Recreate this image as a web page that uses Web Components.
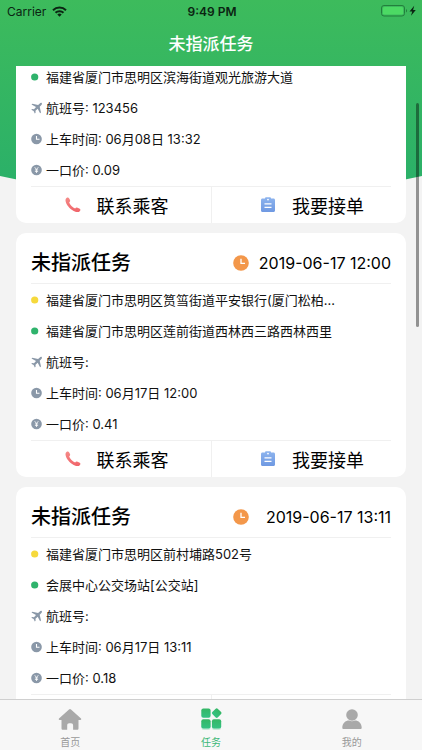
<!DOCTYPE html>
<html lang="zh-CN">
<head>
<meta charset="utf-8">
<meta name="viewport" content="width=device-width, initial-scale=1">
<title>未指派任务</title>
<style>
    body {
        margin: 0;
        background: #f3f3f3;
        color: #111;
        font-family: Inter, "Noto Sans CJK SC", sans-serif;
    }
</style>
</head>
<body>
<task-app>
    <status-bar slot="top" carrier="Carrier" time="9:49 PM"></status-bar>
    <nav-title slot="top">未指派任务</nav-title>

    <task-card continued>
        <task-line icon="to">福建省厦门市思明区滨海街道观光旅游大道</task-line>
        <task-line icon="flight">航班号: 123456</task-line>
        <task-line icon="time">上车时间: 06月08日 13:32</task-line>
        <task-line icon="price">一口价: 0.09</task-line>
    </task-card>

    <task-card name="未指派任务" date="2019-06-17 12:00">
        <task-line icon="from">福建省厦门市思明区筼筜街道平安银行(厦门松柏…</task-line>
        <task-line icon="to">福建省厦门市思明区莲前街道西林西三路西林西里</task-line>
        <task-line icon="flight">航班号:</task-line>
        <task-line icon="time">上车时间: 06月17日 12:00</task-line>
        <task-line icon="price">一口价: 0.41</task-line>
    </task-card>

    <task-card name="未指派任务" date="2019-06-17 13:11">
        <task-line icon="from">福建省厦门市思明区前村埔路502号</task-line>
        <task-line icon="to">会展中心公交场站[公交站]</task-line>
        <task-line icon="flight">航班号:</task-line>
        <task-line icon="time">上车时间: 06月17日 13:11</task-line>
        <task-line icon="price">一口价: 0.18</task-line>
    </task-card>

    <tab-bar slot="bottom">
        <tab-item icon="home">首页</tab-item>
        <tab-item icon="tasks" active>任务</tab-item>
        <tab-item icon="user">我的</tab-item>
    </tab-bar>
</task-app>

<script>
const lineIcons = {
    from: `<svg viewBox="0 0 12 12"><circle cx="3.7" cy="6" r="3.6" fill="#f6d93c"/></svg>`,
    to: `<svg viewBox="0 0 12 12"><circle cx="3.7" cy="6" r="3.6" fill="#2fb36c"/></svg>`,
    flight: `<svg viewBox="0 0 12 12" fill="#8a98a8"><path d="M10.7 1.1c-.6-.5-1.3-.2-1.9.3L7.1 3.1 1.4 1.7l-.9.9L5 5 3 7.200 1.100 7l-.8.8 2.300 1.300 1.200 2.400.8-.8-.1-1.900 2.200-2 2.400 4.500.9-.9-1.300-5.700 1.700-1.700c.6-.6.8-1.400.3-1.900z"/></svg>`,
    time: `<svg viewBox="0 0 12 12"><circle cx="5.5" cy="6" r="5.3" fill="#8a98a8"/><path d="M5.500 2.900v3.300h3" fill="none" stroke="#fff" stroke-width="1.1"/></svg>`,
    price: `<svg viewBox="0 0 12 12"><circle cx="5.5" cy="6" r="5.3" fill="#8a98a8"/><path d="M3.700 3.200 5.500 5.500l1.800-2.300M5.500 5.500V9M3.900 5.900h3.200M3.900 7.400h3.200" fill="none" stroke="#fff" stroke-width=".8"/></svg>`
};

const tabIcons = {
    home: `<svg viewBox="0 0 24 24"><path d="M11 2.4a1.5 1.5 0 0 1 2 0l10 9.2c.5.6.3 1.3-.6 1.3h-1.9v8.4c0 1-.5 1.5-1.4 1.5h-4v-4.4c0-1.5-.8-2.2-2.1-2.2h-1.8c-1.2 0-2 .7-2 2.2v4.4H5c-1 0-1.5-.5-1.5-1.5v-8.4H1.6c-.9 0-1.1-.7-.6-1.3z" fill="#a9a9a9"/></svg>`,
    tasks: `<svg viewBox="0 0 24 24"><defs><linearGradient id="g" x2="0" y2="1"><stop stop-color="#34b765"/><stop offset="1" stop-color="#35c283"/></linearGradient></defs><g fill="#36bf79" opacity=".25"><rect x="2.5" y="14" width="9" height="9" rx="2.5"/><rect x="13" y="14" width="9" height="9" rx="2.5"/></g><g fill="url(#g)"><rect x="2.3" y="1.4" width="9.3" height="9.3" rx="2"/><rect x="2.3" y="12.3" width="9.3" height="9.3" rx="2"/><rect x="12.900" y="12.3" width="9.3" height="9.3" rx="2"/><rect x="13.9" y="2.3" width="7.6" height="7.6" rx="1.4" transform="rotate(45 17.7 6.1)"/></g></svg>`,
    user: `<svg viewBox="0 0 24 24" fill="#a9a9a9"><circle cx="12" cy="8" r="5.8"/><path d="M2.3 20.8c0-4.7 3.2-7.3 6.8-7.3 1.8 1.1 4 1.1 5.8 0 3.6 0 6.8 2.6 6.8 7.3 0 .8-.5 1.3-1.4 1.3H3.7c-.9 0-1.4-.5-1.4-1.3z"/></svg>`
};

class TaskApp extends HTMLElement {
    constructor() {
        super();
        this.attachShadow({mode: "open"}).innerHTML = `
            <style>
                :host {
                    position: relative;
                    display: flex;
                    flex-direction: column;
                    height: 100vh;
                    overflow: hidden;
                }

                /* green backdrop behind the bar and the first card */
                .backdrop {
                    position: absolute;
                    inset: 0 0 auto;
                    height: 220px;
                    background: linear-gradient(#3dbb5c, #27ae6b);
                    clip-path: polygon(0 0, 100% 0, 100% 80%, 50% 100%, 0 80%);
                }

                header, main, footer {
                    position: relative;
                }

                main {
                    flex: 1;
                    min-height: 0;
                    overflow: hidden;
                    display: flex;
                    flex-direction: column;
                    gap: 10px;
                    padding: 0 16px;
                }

                .scrollbar {
                    position: absolute;
                    top: 103px;
                    right: 3px;
                    width: 3px;
                    height: 224px;
                    border-radius: 2px;
                    background: rgba(0, 0, 0, .4);
                }
            </style>

            <div class="backdrop"></div>
            <header><slot name="top"></slot></header>
            <main><slot></slot></main>
            <footer><slot name="bottom"></slot></footer>
            <div class="scrollbar"></div>
        `;
    }
}

class StatusBar extends HTMLElement {
    constructor() {
        super();
        this.attachShadow({mode: "open"});
    }

    connectedCallback() {
        this.shadowRoot.innerHTML = `
            <style>
                :host {
                    display: grid;
                    grid-template-columns: 1fr auto 1fr;
                    align-items: center;
                    height: 22px;
                    padding: 0 5px 0 7px;
                    font-size: 12px;
                    color: #0b2412;
                }

                .left, .right {
                    display: flex;
                    align-items: center;
                    gap: 6px;
                }

                .right {
                    justify-content: flex-end;
                }

                b {
                    font-weight: 600;
                }
            </style>

            <div class="left">
                <span>${this.getAttribute("carrier")}</span>
                <svg width="15" height="11" viewBox="0 0 15 11"><g fill="none" stroke="#0b2412" stroke-width="2"><path d="M1 4.2a9.3 9.3 0 0 1 13 0"/><path d="M3.5 6.8a5.7 5.7 0 0 1 8 0"/></g><path d="M7.5 10.8 5.3 8.5a3.2 3.2 0 0 1 4.4 0z" fill="#0b2412"/></svg>
            </div>
            <b>${this.getAttribute("time")}</b>
            <div class="right">
                <svg width="36" height="12" viewBox="0 0 36 12"><rect x=".5" y=".5" width="23" height="10.5" rx="2.5" fill="none" stroke="#237f3d"/><rect x="2" y="2" width="20" height="7.5" rx="1.3" fill="#4cd964"/><path d="M25 4v3.6c1.4-.6 1.4-3 0-3.6z" fill="#237f3d"/><path d="m33.2.8-4.7 5.7h2.7l-1.2 4.3 4.8-5.8h-2.7z" fill="#0b2412"/></svg>
            </div>
        `;
    }
}

class NavTitle extends HTMLElement {
    constructor() {
        super();
        this.attachShadow({mode: "open"}).innerHTML = `
            <style>
                :host {
                    display: flex;
                    align-items: center;
                    justify-content: center;
                    height: 40px;
                    padding-bottom: 4px;
                }

                h1 {
                    margin: 0;
                    font-size: 17px;
                    font-weight: 500;
                    color: #fff;
                }
            </style>

            <h1><slot></slot></h1>
        `;
    }
}

class TaskLine extends HTMLElement {
    constructor() {
        super();
        this.attachShadow({mode: "open"});
    }

    connectedCallback() {
        this.shadowRoot.innerHTML = `
            <style>
                :host {
                    display: flex;
                    align-items: center;
                    gap: 3px;
                    height: 31px;
                    font-size: 13px;
                    line-height: 20px;
                    white-space: nowrap;
                }

                svg {
                    flex: none;
                    width: 12px;
                    height: 12px;
                }
            </style>

            ${lineIcons[this.getAttribute("icon")]}
            <span><slot></slot></span>
        `;
    }
}

class TaskCard extends HTMLElement {
    constructor() {
        super();
        this.attachShadow({mode: "open"});
    }

    connectedCallback() {
        // a continued card has its head scrolled away under the title bar
        const head = this.hasAttribute("continued") ? "" : `
            <div class="head">
                <h2>${this.getAttribute("name")}</h2>
                <svg width="16" height="16" viewBox="0 0 16 16"><circle cx="8" cy="8" r="7.8" fill="#f3974a"/><path d="M8 3.8v4.5h4" fill="none" stroke="#fff" stroke-width="1.3"/></svg>
                <time>${this.getAttribute("date")}</time>
            </div>
        `;

        this.shadowRoot.innerHTML = `
            <style>
                :host {
                    display: block;
                    flex: none;
                    background: #fff;
                    border-radius: 10px;
                }

                :host([continued]) {
                    margin-top: -5px;
                    border-radius: 0 0 10px 10px;
                }

                .head {
                    display: flex;
                    align-items: center;
                    gap: 8px;
                    height: 50px;
                    margin: 0 15px;
                    padding-top: 10px;
                    box-sizing: border-box;
                }

                .head svg {
                    flex: none;
                }

                h2 {
                    flex: 1;
                    margin: 0;
                    font-size: 20px;
                    font-weight: 500;
                    line-height: 30px;
                    color: #000;
                }

                time {
                    min-width: 134px;
                    font-size: 16px;
                    text-align: right;
                    white-space: nowrap;
                    color: #000;
                }

                hr {
                    height: 1px;
                    margin: 0 15px;
                    border: 0;
                    background: #f0f0f0;
                }

                .lines {
                    padding: 0 15px 1px;
                }

                .actions {
                    display: grid;
                    grid-template-columns: 1fr 1fr;
                    height: 36px;
                }

                button {
                    display: flex;
                    align-items: center;
                    justify-content: center;
                    gap: 16px;
                    padding: 0 0 0 6px;
                    border: 0;
                    background: none;
                    font: inherit;
                    font-size: 18px;
                    color: #000;
                }

                button + button {
                    border-left: 1px solid #f0f0f0;
                }
            </style>

            ${head}
            ${head && "<hr>"}
            <div class="lines"><slot></slot></div>
            <hr>
            <div class="actions">
                <button type="button">
                    <svg width="16" height="16" viewBox="0 0 16 16"><defs><linearGradient id="p" x2="0" y2="1"><stop stop-color="#f58a87"/><stop offset="1" stop-color="#f0646a"/></linearGradient></defs><path d="M1.500 1C2.600.2 3.600.4 4.200 1.600l.8 1.500c.4.9.1 1.500-.8 2.300.7 2.400 3.500 5.200 5.900 6 .8-.8 1.500-1 2.400-.6l1.800.8c1.200.6 1.400 1.400.7 2.300-1 1.200-2.700 1.500-4.600.8C5.900 13.200 1.900 8.900.8 5.100.3 3.200.400 1.800 1.500 1z" fill="url(#p)"/></svg>
                    <span>联系乘客</span>
                </button>
                <button type="button">
                    <svg width="16" height="16" viewBox="0 0 16 16"><defs><linearGradient id="b" x2="0" y2="1"><stop stop-color="#8db4ee"/><stop offset="1" stop-color="#6f99e2"/></linearGradient></defs><path d="M2.500 1.500H5V1.200C5 .6 5.400.3 6 .3h4c.6 0 1 .3 1 .9v.3h2.500c.9 0 1.500.6 1.500 1.500v10.500c0 .9-.6 1.500-1.500 1.500h-11C1.600 15 1 14.400 1 13.500V3c0-.9.600-1.500 1.500-1.500z" fill="url(#b)"/><path d="M4.500 6.900h7M4.500 10.300h7" stroke="#fff" stroke-width="1.200"/><circle cx="8" cy="2.600" r=".9" fill="#fff"/></svg>
                    <span>我要接单</span>
                </button>
            </div>
        `;
    }
}

class TabBar extends HTMLElement {
    constructor() {
        super();
        this.attachShadow({mode: "open"}).innerHTML = `
            <style>
                :host {
                    display: block;
                }

                nav {
                    display: grid;
                    grid-template-columns: repeat(3, 1fr);
                    height: 50px;
                    border-top: 1px solid #cfcfcf;
                    background: #f7f7f7;
                }
            </style>

            <nav><slot></slot></nav>
        `;
    }
}

class TabItem extends HTMLElement {
    constructor() {
        super();
        this.attachShadow({mode: "open"});
    }

    connectedCallback() {
        this.shadowRoot.innerHTML = `
            <style>
                :host {
                    display: block;
                    color: #999;
                }

                :host([active]) {
                    color: #3cb878;
                }

                a {
                    display: flex;
                    flex-direction: column;
                    align-items: center;
                    gap: 4px;
                    padding-top: 7px;
                    font-size: 10px;
                    line-height: 14px;
                    color: inherit;
                    text-decoration: none;
                }

                svg {
                    width: 24px;
                    height: 24px;
                }
            </style>

            <a href="#${this.getAttribute("icon")}">
                ${tabIcons[this.getAttribute("icon")]}
                <span><slot></slot></span>
            </a>
        `;
    }
}

customElements.define("task-app", TaskApp);
customElements.define("status-bar", StatusBar);
customElements.define("nav-title", NavTitle);
customElements.define("task-line", TaskLine);
customElements.define("task-card", TaskCard);
customElements.define("tab-bar", TabBar);
customElements.define("tab-item", TabItem);
</script>
</body>
</html>
